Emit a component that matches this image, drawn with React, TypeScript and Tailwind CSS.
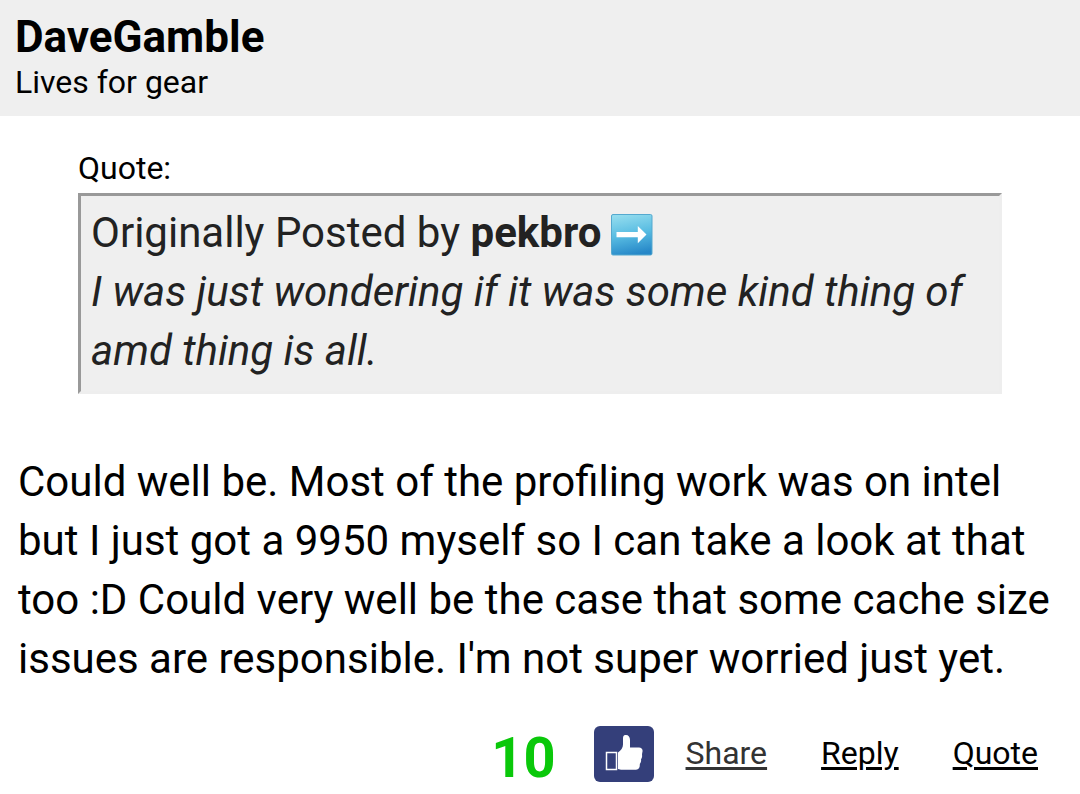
import React from 'react';

const ArrowIcon: React.FC = () => (
  <svg viewBox="0 0 42 42" className="w-[42px] h-[42px] block" aria-hidden="true">
    <defs>
      <linearGradient id="arrowBg" x1="0.3" y1="0" x2="0.5" y2="1">
        <stop offset="0" stopColor="#93dcee" />
        <stop offset="0.5" stopColor="#58bce2" />
        <stop offset="1" stopColor="#2687c8" />
      </linearGradient>
    </defs>
    <rect x="0.5" y="0.5" width="40.5" height="40.5" rx="1.5" fill="url(#arrowBg)" stroke="#55a9cf" strokeWidth="1" />
    <path d="M5.5 18H26.8V12L35.5 20.6L26.8 29.3V23.3H5.5Z" fill="#fff" />
  </svg>
);

const ThumbIcon: React.FC = () => (
  <svg viewBox="0 0 60 56" className="w-[60px] h-14 block" aria-hidden="true">
    <rect width="60" height="56" rx="6" fill="#343f7a" />
    <rect x="12.5" y="26.5" width="10" height="17" fill="none" stroke="#fff" strokeWidth="1.5" />
    <path
      d="M24 26.5C27 24.5 29 21.5 29 18.5V12C29 9.5 30.5 9 32 9C34.5 9 36 11 36 14V21.5H45C47.5 21.5 49 23.5 48.5 25.5C48.2 27 48 28 48 29C48.5 31 47.5 32.5 47 33.5C47.5 35.5 46.5 37 45.8 38C46 41.5 45 43.8 42 43.8H27L24 43Z"
      fill="#fff"
    />
  </svg>
);

// Username and rank at the top of the post
const PostHeader: React.FC<{ name: string; rank: string }> = ({ name, rank }) => (
  <header className="bg-[#efefef] px-[15px] pt-3 pb-[13px]">
    <h1 className="text-[44px] leading-[50px] font-bold">{name}</h1>
    <p className="text-[32px] leading-[41px]">{rank}</p>
  </header>
);

const QuoteBlock: React.FC<{ author: string; children: React.ReactNode }> = ({ author, children }) => (
  <section className="mx-[78px] mt-8">
    <p className="text-[32px] leading-[41px]">Quote:</p>
    <blockquote className="mt-1 border-[3px] border-t-[#999] border-l-[#999] border-r-[#eee] border-b-[#eee] bg-[#efefef] px-[10px] pt-[7px] pb-[11px] text-[42px] leading-[59px] text-[#222]">
      <div className="flex items-center gap-[10px]">
        <span>
          Originally Posted by <strong>{author}</strong>
        </span>
        <a href="#post" aria-label="View post" className="pt-1">
          <ArrowIcon />
        </a>
      </div>
      <p className="italic">{children}</p>
    </blockquote>
  </section>
);

const App: React.FC = () => (
  <article className="min-h-screen bg-white text-black font-[Roboto,sans-serif]">
    <PostHeader name="DaveGamble" rank="Lives for gear" />
    <QuoteBlock author="pekbro">
      I was just wondering if it was some kind thing of amd thing is all.
    </QuoteBlock>
    <p className="mt-[58px] px-[18px] text-[42px] leading-[59px]">
      Could well be. Most of the profiling work was on intel but I just got a 9950 myself so I can take a look at that
      too :D Could very well be the case that some cache size issues are responsible. I'm not super worried just yet.
    </p>
    <footer className="mt-[34px] flex items-center justify-end pr-[42px] text-[32px]">
      <span className="mr-[38px] pt-2 text-[56px] leading-[56px] font-bold text-[#0ac80a]">10</span>
      <button type="button" aria-label="Like" className="mr-8">
        <ThumbIcon />
      </button>
      <nav className="flex gap-[54px] pb-0.5 leading-[56px]">
        <a href="#share" className="underline decoration-[length:3px] underline-offset-[3px] text-[#333]">Share</a>
        <a href="#reply" className="underline decoration-[length:3px] underline-offset-[3px]">Reply</a>
        <a href="#quote" className="underline decoration-[length:3px] underline-offset-[3px]">Quote</a>
      </nav>
    </footer>
  </article>
);

export default App;
